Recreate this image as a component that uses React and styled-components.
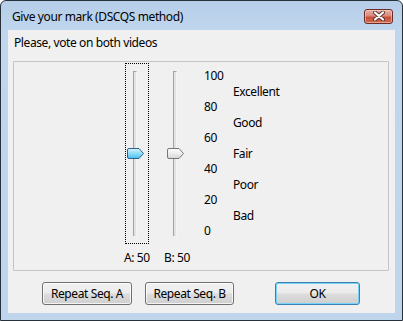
import React from "react";
import styled, { createGlobalStyle } from "styled-components";

const Global = createGlobalStyle`
  html, body { margin: 0; padding: 0; background: #ffffff; }
  body { font-family: "Noto Sans", "Open Sans", sans-serif; font-size: 12px; letter-spacing: -0.4px; color: #000; }
`;

const Window = styled.div`
  width: 403px;
  height: 321px;
  box-sizing: border-box;
  border: 1px solid #27313c;
  border-radius: 6px 6px 0 0;
  background: linear-gradient(180deg, #b6cee8 0px, #c0d6ee 30px, #bfd5ec 100%);
  display: flex;
  flex-direction: column;
  padding: 0 7px 7px 7px;
  overflow: hidden;
`;

const TitleBar = styled.div`
  height: 29px;
  display: flex;
  align-items: center;
  justify-content: space-between;
  padding: 0 2px 0 4px;
`;

const Title = styled.span`
  font-size: 12px;
  color: #000;
  margin-top: 1px;
`;

const CloseButton = styled.div`
  width: 29px;
  height: 15px;
  box-sizing: border-box;
  border: 1px solid #6a2c27;
  border-radius: 3px;
  background: linear-gradient(180deg, #eab1a6 0%, #d88a7b 45%, #c55239 55%, #cf6a50 100%);
  box-shadow: inset 0 0 0 1px rgba(255, 220, 210, 0.5);
  display: flex;
  align-items: center;
  justify-content: center;
  margin-top: 1px;
`;

const Client = styled.div`
  flex: 1;
  background: #f0f0f0;
  display: flex;
  flex-direction: column;
`;

const Prompt = styled.div`
  padding: 5px 0 0 6px;
  line-height: 16px;
  height: 16px;
`;

const GroupBox = styled.div`
  margin: 10px 6px 0 5px;
  height: 210px;
  box-sizing: border-box;
  border: 1px solid #c4c4c4;
  border-radius: 1px;
  display: flex;
  align-items: flex-start;
  padding: 1px 0 0 111px;
  gap: 16px;
`;

const SliderCol = styled.div`
  display: flex;
  flex-direction: column;
  width: 24px;
`;

const FocusRect = styled.div`
  position: relative;
  width: 24px;
  height: 181px;
  box-sizing: border-box;
  border: 1px dotted ${(p) => (p.$focused ? "#000" : "transparent")};
`;

const Track = styled.div`
  position: absolute;
  left: 7px;
  top: 7px;
  bottom: 7px;
  width: 2px;
  background: #e2e2e2;
  border-left: 1px solid #a3a3a3;
  border-top: 1px solid #a3a3a3;
  border-right: 1px solid #f4f4f4;
`;

const Thumb = styled.svg`
  position: absolute;
  left: 1px;
  top: 84px;
`;

const ValueLabel = styled.div`
  margin-top: 6px;
  line-height: 15px;
  white-space: nowrap;
  margin-left: -1px;
`;

const Scale = styled.div`
  display: grid;
  grid-template-columns: 29px auto;
  grid-auto-rows: 15.5px;
  margin-top: 5px;
  margin-left: -1px;
`;

const ScaleNum = styled.div`
  grid-column: 1;
  grid-row: ${(p) => p.$row};
  line-height: 15.5px;
`;

const ScaleWord = styled.div`
  grid-column: 2;
  grid-row: ${(p) => p.$row};
  line-height: 15.5px;
`;

const ButtonRow = styled.div`
  display: flex;
  padding: 11px 35px 0 34px;
  gap: 13px;
`;

const Button = styled.button`
  font-family: inherit;
  font-size: 12px;
  letter-spacing: -0.4px;
  color: #000;
  width: ${(p) => p.$w}px;
  height: 23px;
  padding: 0;
  box-sizing: border-box;
  border: 1px solid ${(p) => (p.$default ? "#3c7fb1" : "#707070")};
  border-radius: 3px;
  background: linear-gradient(180deg, #f2f2f2 0%, #ebebeb 49%, #dddddd 51%, #cfcfcf 100%);
  box-shadow: inset 0 0 0 1px ${(p) => (p.$default ? "#74d3f6" : "rgba(255,255,255,0.75)")};
  margin-left: ${(p) => (p.$push ? "auto" : "0")};
`;

const ThumbShape = ({ active }) => (
  <Thumb width="18" height="11" viewBox="0 0 18 11">
    <defs>
      <linearGradient id={active ? "tA" : "tB"} x1="0" y1="0" x2="0" y2="1">
        {active ? (
          <>
            <stop offset="0" stopColor="#d8f4fe" />
            <stop offset="0.5" stopColor="#8fdcf8" />
            <stop offset="1" stopColor="#45c0ee" />
          </>
        ) : (
          <>
            <stop offset="0" stopColor="#fdfdfd" />
            <stop offset="0.5" stopColor="#ececec" />
            <stop offset="1" stopColor="#d6d6d6" />
          </>
        )}
      </linearGradient>
    </defs>
    <path
      d="M2 0.5 H12 L16.5 5.5 L12 10.5 H2 Q0.5 10.5 0.5 9 V2 Q0.5 0.5 2 0.5 Z"
      fill={`url(#${active ? "tA" : "tB"})`}
      stroke={active ? "#2c628b" : "#777777"}
      strokeWidth="1"
    />
  </Thumb>
);

const Slider = ({ name, value, focused }) => (
  <SliderCol>
    <FocusRect $focused={focused}>
      <Track />
      <ThumbShape active={focused} />
    </FocusRect>
    <ValueLabel>
      {name}: {value}
    </ValueLabel>
  </SliderCol>
);

const nums = ["100", "80", "60", "40", "20", "0"];
const words = ["Excellent", "Good", "Fair", "Poor", "Bad"];

export default function App() {
  return (
    <>
      <Global />
      <Window>
        <TitleBar>
          <Title>Give your mark (DSCQS method)</Title>
          <CloseButton>
            <svg width="14" height="10" viewBox="0 0 14 10">
              <path
                d="M3 1.5 L11 8.5 M11 1.5 L3 8.5"
                stroke="#5a3030"
                strokeWidth="4"
                strokeLinecap="round"
              />
              <path
                d="M3 1.5 L11 8.5 M11 1.5 L3 8.5"
                stroke="#ffffff"
                strokeWidth="2.2"
                strokeLinecap="round"
              />
            </svg>
          </CloseButton>
        </TitleBar>
        <Client>
          <Prompt>Please, vote on both videos</Prompt>
          <GroupBox>
            <Slider name="A" value={50} focused />
            <Slider name="B" value={50} />
            <Scale>
              {nums.map((n, i) => (
                <ScaleNum key={n} $row={i * 2 + 1}>
                  {n}
                </ScaleNum>
              ))}
              {words.map((w, i) => (
                <ScaleWord key={w} $row={i * 2 + 2}>
                  {w}
                </ScaleWord>
              ))}
            </Scale>
          </GroupBox>
          <ButtonRow>
            <Button $w={90}>Repeat Seq. A</Button>
            <Button $w={89}>Repeat Seq. B</Button>
            <Button $w={85} $default $push>
              OK
            </Button>
          </ButtonRow>
        </Client>
      </Window>
    </>
  );
}
